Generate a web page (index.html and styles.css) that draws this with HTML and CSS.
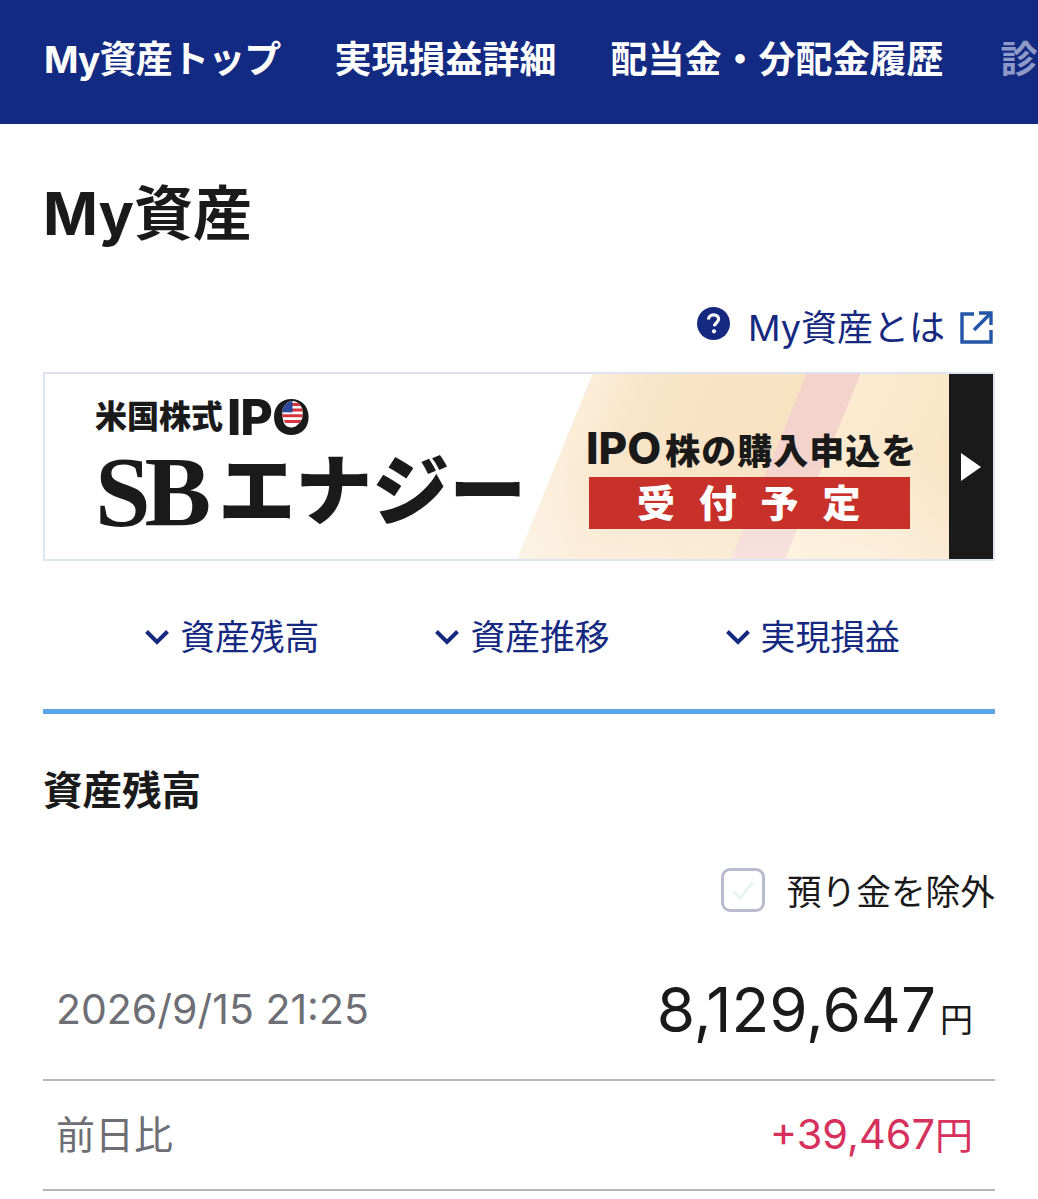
FILE: index.html
```html
<!DOCTYPE html>
<html lang="ja">
<head>
  <meta charset="UTF-8">
  <title>My資産</title>
  <link rel="stylesheet" href="styles.css">
</head>
<body>

<nav class="tabs">
  <a class="tab tab-first">My資産トップ</a>
  <a class="tab">実現損益詳細</a>
  <a class="tab">配当金・分配金履歴</a>
  <a class="tab tab-faded">診断</a>
</nav>

<main class="container">
  <h1 class="page-title">My資産</h1>

  <div class="help-row">
    <svg class="help-icon" viewBox="0 0 33 33">
      <circle cx="16.5" cy="16.5" r="16.5" fill="#14297f"/>
      <path d="M11.5 12.6c0-3 2.200-4.800 5.100-4.800 2.900 0 5 1.700 5 4.300 0 3.600-4.100 3.700-4.100 7.100" fill="none" stroke="#fff" stroke-width="3.200"/>
      <circle cx="17" cy="24.300" r="2.100" fill="#fff"/>
    </svg>
    <a class="help-link">My資産とは</a>
    <svg class="external-icon" viewBox="0 0 33 33" fill="none" stroke="#2456a8" stroke-width="3.400">
      <path d="M14 3H2v28h29V19"/>
      <path d="M14 19 30 3M19 2h12v12"/>
    </svg>
  </div>

  <div class="banner">
    <div class="banner-main">
      <div class="banner-left">
        <div class="banner-kicker">米国株式<span class="kicker-ipo">IP<span class="kicker-o">O<svg class="flag" viewBox="0 0 18 22">
          <rect width="18" height="22" fill="#fff"/>
          <path d="M0 3h18M0 8h18M0 13h18M0 18h18" stroke="#d6333f" stroke-width="2.600"/>
          <rect width="9" height="10" fill="#2c4a9a"/>
        </svg></span></span></div>
        <div class="banner-name"><span class="banner-sb">SB</span>エナジー</div>
      </div>
      <div class="banner-right">
        <div class="banner-lead"><span class="lead-ipo">IPO</span>株の購入申込を</div>
        <div class="banner-badge">受付予定</div>
      </div>
    </div>
    <div class="banner-tab"><span class="banner-arrow"></span></div>
  </div>

  <div class="anchors">
    <a class="anchor"><svg class="chevron" viewBox="0 0 24 16"><path d="M1.500 2.500 12 13 22.500 2.500" fill="none" stroke="#14297f" stroke-width="4"/></svg>資産残高</a>
    <a class="anchor"><svg class="chevron" viewBox="0 0 24 16"><path d="M1.500 2.500 12 13 22.500 2.500" fill="none" stroke="#14297f" stroke-width="4"/></svg>資産推移</a>
    <a class="anchor"><svg class="chevron" viewBox="0 0 24 16"><path d="M1.500 2.500 12 13 22.500 2.500" fill="none" stroke="#14297f" stroke-width="4"/></svg>実現損益</a>
  </div>

  <section class="balance">
    <h2 class="section-title">資産残高</h2>

    <label class="exclude">
      <span class="checkbox"><svg viewBox="0 0 38 38"><path d="M9 20l7 7L29 11" fill="none" stroke="#e4f2f5" stroke-width="2.600"/></svg></span>
      預り金を除外
    </label>

    <div class="row row-total">
      <span class="row-label row-date">2026/9/15 21:25</span>
      <span class="total">8,129,647<span class="total-unit">円</span></span>
    </div>
    <div class="row row-diff">
      <span class="row-label">前日比</span>
      <span class="diff">+39,467<span class="diff-unit">円</span></span>
    </div>
  </section>
</main>

</body>
</html>
```

FILE: styles.css
```css
html, body {
  margin: 0;
  height: 1199px;
  overflow: hidden;
}

body {
  font-family: Inter, "Noto Sans CJK JP", sans-serif;
  background-color: #fff;
  color: #1a1a1a;
}

.tabs {
  display: flex;
  align-items: center;
  gap: 54px;
  height: 124px;
  padding: 0 0 5px 44px;
  box-sizing: border-box;
  background-color: #132a82;
  overflow: hidden;
  white-space: nowrap;
}

.tab {
  color: #fff;
  font-size: 37px;
  font-weight: 700;
  line-height: 1;
}

.tab-first {
  letter-spacing: -0.8px;
}

.tab-faded {
  margin-left: 3px;
  color: #8e9bc9;
}

.container {
  padding: 0 43px;
}

.page-title {
  margin: 0;
  padding-top: 50px;
  font-size: 59px;
  font-weight: 700;
  line-height: 80px;
}

.help-row {
  display: flex;
  justify-content: flex-end;
  align-items: center;
  height: 50px;
  margin-top: 49px;
  color: #14297f;
}

.help-icon {
  width: 33px;
  height: 33px;
  margin: -10px 18px 0 0;
}

.help-link {
  font-size: 36px;
  line-height: 50px;
}

.external-icon {
  width: 33px;
  height: 33px;
  margin: -2px 2px 0 15px;
}

.banner {
  display: flex;
  height: 189px;
  margin-top: 19px;
  border: 2px solid #dde3f0;
  box-sizing: border-box;
}

.banner-main {
  flex: 1;
  display: flex;
  justify-content: space-between;
  background:
    linear-gradient(to bottom, rgba(255, 255, 255, 0) 45%, rgba(255, 255, 255, 0.35)),
    linear-gradient(112.2deg,
      #fff 507px, #fbeeda 507px, #f9e5c9 560px, #f9e2c2 705px,
      #f3d3cc 705px, #f3d3cc 755px,
      #fcebd0 755px, #fae6c8 850px, #f9e0bd 908px);
}

.banner-left {
  padding: 14px 0 0 50px;
}

.banner-kicker {
  display: flex;
  align-items: center;
  height: 58px;
  font-size: 32px;
  font-weight: 900;
  line-height: 1;
  white-space: nowrap;
}

.kicker-ipo {
  font-family: Inter, sans-serif;
  margin-left: 4px;
  font-size: 50px;
  font-weight: 800;
  letter-spacing: -1px;
}

.kicker-o {
  position: relative;
}

.flag {
  position: absolute;
  left: 10px;
  top: 14px;
  width: 21px;
  height: 25px;
  border-radius: 50%;
}

.banner-name {
  display: flex;
  align-items: center;
  height: 85px;
  margin-top: 3px;
  font-size: 77px;
  font-weight: 900;
  line-height: 1;
  white-space: nowrap;
}

.banner-sb {
  margin-right: 13px;
  font-family: "Liberation Serif", serif;
  font-size: 100px;
  font-weight: 700;
  letter-spacing: -6px;
}

.banner-right {
  padding: 49px 36px 0 0;
  width: 327px;
  box-sizing: content-box;
}

.banner-lead {
  height: 54px;
  font-size: 35px;
  font-weight: 900;
  letter-spacing: 1px;
  line-height: 50px;
  white-space: nowrap;
}

.lead-ipo {
  font-family: Inter, sans-serif;
  margin-right: 4px;
  font-size: 44px;
  font-weight: 800;
  letter-spacing: 0;
}

.banner-badge {
  height: 52px;
  margin: 0 3px;
  padding-left: 48px;
  background-color: #c8312a;
  color: #fff;
  font-size: 38px;
  font-weight: 900;
  letter-spacing: 23.8px;
  line-height: 52px;
}

.banner-tab {
  display: flex;
  justify-content: center;
  align-items: center;
  width: 44px;
  background-color: #1a1a1a;
}

.banner-arrow {
  width: 0;
  height: 0;
  border-left: 20px solid #fff;
  border-top: 14px solid transparent;
  border-bottom: 14px solid transparent;
}

.anchors {
  display: flex;
  justify-content: center;
  gap: 116px;
  height: 153px;
  padding: 47px 0 0 7px;
  box-sizing: border-box;
  border-bottom: 5px solid #5aa5e8;
}

.anchor {
  display: flex;
  align-items: center;
  height: 54px;
  color: #14297f;
  font-size: 34.8px;
}

.chevron {
  width: 24px;
  height: 16px;
  margin: 3px 11px 0 0;
}

.section-title {
  margin: 0;
  padding-top: 51px;
  font-size: 39.5px;
  font-weight: 700;
  line-height: 52px;
}

.exclude {
  display: flex;
  justify-content: flex-end;
  align-items: center;
  margin-top: 49px;
  height: 48px;
  font-size: 34.7px;
}

.checkbox {
  width: 44px;
  height: 44px;
  margin-right: 22px;
  border: 3px solid #b9bccc;
  border-radius: 9px;
  box-sizing: border-box;
}

.checkbox svg {
  display: block;
}

.row {
  display: flex;
  justify-content: space-between;
  align-items: center;
  padding: 0 22px 0 13px;
  border-bottom: 2px solid #b4b6bb;
  box-sizing: border-box;
}

.row-total {
  height: 167px;
  padding-top: 25px;
}

.row-diff {
  height: 110px;
  padding-bottom: 6px;
}

.row-label {
  color: #6d6f75;
  font-size: 39px;
}

.row-date {
  font-size: 41px;
}

.total {
  font-size: 62px;
}

.total-unit {
  margin-left: 4px;
  font-size: 33px;
}

.diff {
  color: #d6305c;
  font-size: 41.5px;
}

.diff-unit {
  font-size: 38px;
}
```
